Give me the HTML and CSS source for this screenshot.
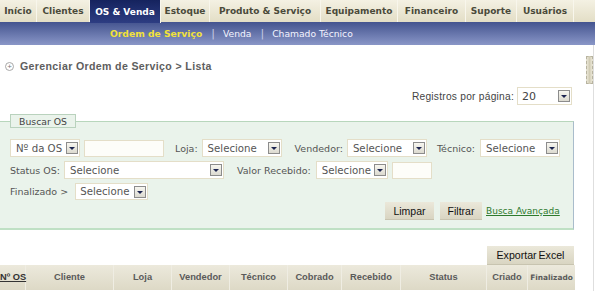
FILE: index.html
```html
<!DOCTYPE html>
<html>
<head>
<meta charset="utf-8">
<link rel="stylesheet" href="styles.css">
</head>
<body>
<div class="topnav">
  <div class="tab">Início</div>
  <div class="tab">Clientes</div>
  <div class="tab active">OS &amp; Venda</div>
  <div class="tab">Estoque</div>
  <div class="tab">Produto &amp; Serviço</div>
  <div class="tab">Equipamento</div>
  <div class="tab">Financeiro</div>
  <div class="tab">Suporte</div>
  <div class="tab">Usuários</div>
  <div class="tab filler"></div>
</div>
<div class="subnav">
  <span class="sub current">Ordem de Serviço</span>
  <span class="sep">|</span>
  <span class="sub">Venda</span>
  <span class="sep">|</span>
  <span class="sub">Chamado Técnico</span>
</div>
<div class="page">
  <div class="scrollthumb"></div>
  <div class="crumb">
    <span class="plus">+</span>
    <span>Gerenciar Ordem de Serviço &gt; Lista</span>
  </div>
  <div class="regs">
    <span class="regs-label">Registros por página:</span>
    <div class="sel sel-regs"><span class="val">20</span><span class="arrow"></span></div>
  </div>
  <div class="box">
    <div class="legend">Buscar OS</div>
    <div class="row row1">
      <div class="sel sel-os"><span class="val">Nº da OS</span><span class="arrow"></span></div>
      <div class="inp inp-os"></div>
      <span class="lbl lbl-loja">Loja:</span>
      <div class="sel sel-80"><span class="val">Selecione</span><span class="arrow"></span></div>
      <span class="lbl lbl-vend">Vendedor:</span>
      <div class="sel sel-80"><span class="val">Selecione</span><span class="arrow"></span></div>
      <span class="lbl lbl-tec">Técnico:</span>
      <div class="sel sel-80"><span class="val">Selecione</span><span class="arrow"></span></div>
    </div>
    <div class="row row2">
      <span class="lbl">Status OS:</span>
      <div class="sel sel-status"><span class="val">Selecione</span><span class="arrow"></span></div>
      <span class="lbl lbl-valor">Valor Recebido:</span>
      <div class="sel sel-valor"><span class="val">Selecione</span><span class="arrow"></span></div>
      <div class="inp inp-valor"></div>
    </div>
    <div class="row row3">
      <span class="lbl">Finalizado &gt;</span>
      <div class="sel sel-fin"><span class="val">Selecione</span><span class="arrow"></span></div>
    </div>
    <div class="row actions">
      <button class="btn btn-limpar">Limpar</button>
      <button class="btn btn-filtrar">Filtrar</button>
      <a class="adv" href="#">Busca Avançada</a>
    </div>
  </div>
  <div class="export-row">
    <button class="btn btn-export">Exportar Excel</button>
  </div>
  <div class="thead">
    <div class="th th-num"><u>Nº OS</u></div>
    <div class="th">Cliente</div>
    <div class="th">Loja</div>
    <div class="th">Vendedor</div>
    <div class="th">Técnico</div>
    <div class="th">Cobrado</div>
    <div class="th">Recebido</div>
    <div class="th">Status</div>
    <div class="th">Criado</div>
    <div class="th th-fin">Finalizado</div>
  </div>
</div>
</body>
</html>
```

FILE: styles.css
```css
* { box-sizing: border-box; }
html, body { margin: 0; padding: 0; background: #fff; }
body { width: 595px; height: 291px; overflow: hidden; font-family: "DejaVu Sans", Verdana, sans-serif; }

.topnav {
  display: grid;
  grid-template-columns: 37px 53px 71px 49px 111px 77px 68px 51px 57px 1fr;
  height: 22px;
  background: linear-gradient(#f4f1e3, #e3dec6);
}
.tab {
  display: flex; align-items: center; justify-content: center;
  font-weight: bold; font-size: 9px; color: #4a4a3a;
  border-right: 1px solid #f8f6ec;
  height: 22px;
}
.tab.filler { border-right: none; }
.tab.active {
  background: linear-gradient(#15235e, #2d3d82);
  color: #fff;
  height: 23px;
  position: relative; z-index: 1;
}

.subnav {
  height: 23px;
  background: linear-gradient(#44548f, #8996c7);
  display: flex; align-items: center;
  padding-left: 110px;
  font-size: 9.2px; color: #fff;
}
.sub { color: #f4f4ff; }
.sub.current { color: #f2e23a; font-weight: bold; }
.sep { color: #c8cce4; margin: 0 8px 0 9px; font-size: 11px; }

.page {
  position: relative;
  width: 594px;
  height: 246px;
  border-right: 1px solid #dedede;
  display: flex; flex-direction: column;
}
.scrollthumb {
  position: absolute; left: 586px; top: 11px;
  width: 7px; height: 28px;
  border: 1px dashed #b8b4a0;
  background: linear-gradient(90deg, #e8e4d4, #d2cdb6, #e8e4d4);
}

.crumb {
  margin-top: 14px; height: 14px;
  display: flex; align-items: center;
  font-family: "Liberation Sans", Arial, sans-serif;
  font-weight: bold; font-size: 10.6px; color: #5e5e5e;
  letter-spacing: 0.35px;
}
.plus {
  width: 9px; height: 9px; border: 1px solid #a8a8a8; border-radius: 50%;
  margin: 0 6px 0 5px;
  font-size: 8px; line-height: 7px; text-align: center; color: #777;
  font-weight: normal; letter-spacing: 0;
}

.regs {
  margin-top: 14px;
  display: flex; align-items: center; justify-content: flex-end;
  padding-right: 21px;
  height: 18px;
}
.regs-label {
  font-family: "Liberation Sans", Arial, sans-serif;
  font-size: 10.2px; color: #444; margin-right: 3px;
  letter-spacing: 0.25px;
}

.sel {
  display: flex; align-items: center; justify-content: space-between;
  height: 18px;
  background: #fff;
  border: 1px solid #e4dec8;
  padding-left: 5px; padding-right: 1px;
  font-size: 10.2px; color: #555;
}
.sel .arrow {
  width: 12px; height: 12px;
  border: 1px solid #8c8c8c;
  background: linear-gradient(#f7f6f0, #dcdad0);
  position: relative;
  flex: none;
}
.sel .arrow::after {
  content: ""; position: absolute; left: 2px; top: 4px;
  border-left: 3px solid transparent; border-right: 3px solid transparent;
  border-top: 3px solid #1c2450;
}
.sel-regs { width: 55px; font-size: 11px; padding-left: 4px; color: #444; }

.box {
  margin-top: 16px;
  width: 574px;
  border-top: 1px solid #b8d6bc;
  border-right: 1px solid #a9bccb;
  border-bottom: 2px solid #bfe0c4;
  background: #eaf3eb;
  padding: 0 0 8px 10px;
}
.legend {
  margin-top: -8px;
  width: 66px; height: 14px;
  border: 1px solid #b9d2bd;
  background: #eaf3eb;
  font-size: 9.3px; color: #444;
  display: flex; align-items: center; justify-content: center;
}
.row { display: flex; align-items: center; }
.row1 { margin-top: 11px; height: 18px; }
.row2 { margin-top: 4px; height: 18px; }
.row3 { margin-top: 4px; height: 17px; }
.actions { margin-top: 2px; height: 18px; padding-left: 375px; }

.lbl { font-size: 9.5px; color: #555; white-space: nowrap; }
.inp { height: 17px; background: #fdfdf9; border: 1px solid #e4dec8; }

.sel-os { width: 70px; }
.inp-os { width: 80px; margin-left: 4px; }
.lbl-loja { margin-left: 11px; margin-right: 4px; }
.sel-80 { width: 80px; }
.lbl-vend { margin-left: 13px; margin-right: 4px; }
.lbl-tec { margin-left: 10px; margin-right: 5px; }

.sel-status { width: 160px; margin-left: 4px; }
.lbl-valor { margin-left: 13px; margin-right: 5px; }
.sel-valor { width: 72px; }
.inp-valor { width: 40px; margin-left: 4px; }

.row3 .sel { height: 17px; }
.sel-fin { width: 73px; margin-left: 7px; padding-left: 4px; }

.btn {
  font-family: "Liberation Sans", Arial, sans-serif;
  font-size: 10.5px; color: #111;
  background: linear-gradient(#ebe8da, #d9d5c2);
  border: none; border-bottom: 1px solid #c8c4b0;
  height: 18px; padding: 0;
}
.btn-limpar { width: 49px; }
.btn-filtrar { width: 42px; margin-left: 6px; }
.adv {
  margin-left: 4px;
  font-size: 9px; color: #2d7a2d;
}

.export-row {
  margin-top: 16px;
  display: flex; justify-content: flex-end;
  width: 574px;
}
.btn-export { width: 87px; height: 19px; font-size: 10.6px; word-spacing: -1px; }

.thead {
  display: grid;
  grid-template-columns: 26px 88px 58px 58px 58px 54px 59px 86px 41px 47px;
  height: 25px;
  background: linear-gradient(#ece9dc, #ddd9c6);
  width: 575px;
}
.th {
  display: flex; align-items: center; justify-content: center;
  font-family: "Liberation Sans", Arial, sans-serif;
  font-weight: bold; font-size: 9.3px; color: #5a5a5a;
  border-right: 1px solid #efede3;
  padding-bottom: 1px;
  white-space: nowrap;
}
.th-num { justify-content: flex-start; color: #333; }
.th-fin { font-family: "DejaVu Sans", Verdana, sans-serif; font-size: 7.4px; border-right: none; }
```
